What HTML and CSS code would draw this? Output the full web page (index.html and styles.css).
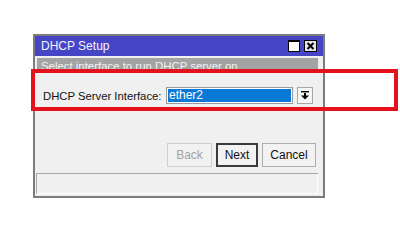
FILE: index.html
```html
<!DOCTYPE html>
<html>
<head>
<meta charset="utf-8">
<link rel="stylesheet" href="styles.css">
</head>
<body>
<div class="window">
  <div class="titlebar">
    <span class="title">DHCP Setup</span>
    <div class="tbtns">
      <span class="tbtn max"><svg width="12" height="12" viewBox="0 0 12 12"><rect x="0.5" y="0.5" width="11" height="11" fill="#fff" stroke="#000"/><rect x="0" y="0" width="12" height="2" fill="#000"/></svg></span>
      <span class="tbtn close"><svg width="13" height="12" viewBox="0 0 13 12"><rect x="0.5" y="0.5" width="12" height="11" fill="#e6e6e6" stroke="#000"/><path d="M3.5 3 L9.5 9 M9.5 3 L3.5 9" stroke="#000" stroke-width="2"/></svg></span>
    </div>
  </div>
  <div class="banner"><span>Select interface to run DHCP server on</span></div>
  <div class="row">
    <span class="label">DHCP Server Interface:</span>
    <div class="field"><span class="sel">ether2</span></div>
    <span class="drop"><svg width="8" height="9" viewBox="0 0 8 9"><rect x="0" y="0" width="8" height="1.4" fill="#000"/><rect x="3" y="2" width="2" height="3" fill="#000"/><path d="M0 4.5 H8 L4 8.5 Z" fill="#000"/></svg></span>
  </div>
  <div class="buttons">
    <span class="btn disabled">Back</span>
    <span class="btn default">Next</span>
    <span class="btn">Cancel</span>
  </div>
  <div class="sep"></div>
  <div class="status"></div>
</div>
<div class="highlight"></div>
</body>
</html>
```
FILE: styles.css
```css
html, body {
  margin: 0;
  padding: 0;
  background: #ffffff;
  width: 400px;
  height: 236px;
  overflow: hidden;
  font-family: "Liberation Sans", Arial, sans-serif;
}
.window {
  margin: 34px 0 0 33px;
  width: 292px;
  height: 164px;
  box-sizing: border-box;
  border: 2px solid #7c7c7c;
  background: #f0f0f0;
  display: flex;
  flex-direction: column;
}
.titlebar {
  height: 20px;
  background: #4545c5;
  display: flex;
  align-items: center;
  justify-content: space-between;
  padding: 0 6px 0 6px;
}
.title {
  color: #f4f4ff;
  font-size: 12px;
}
.tbtns {
  display: flex;
  gap: 4px;
  align-items: center;
  height: 12px;
}
.tbtn { display: block; height: 12px; }
.tbtn svg { display: block; }
.banner {
  margin: 2px 5px 0 2px;
  height: 11px;
  background: #a3a3a3;
  overflow: hidden;
  padding-left: 4px;
}
.banner span {
  display: block;
  color: #f2f2f2;
  font-size: 11.4px;
  line-height: 14px;
  margin-top: 1px;
}
.row {
  margin-top: 18px;
  height: 17px;
  display: flex;
  align-items: center;
  padding-left: 8px;
}
.label {
  font-size: 11.3px;
  color: #111;
  width: 123px;
}
.field {
  width: 127px;
  height: 17px;
  box-sizing: border-box;
  border: 1px solid #9a9a9a;
  background: #fff;
  padding: 1px;
}
.sel {
  display: block;
  height: 13px;
  background: #0a78d6;
  color: #fff;
  font-size: 12px;
  line-height: 13px;
  padding-left: 1px;
}
.drop {
  margin-left: 4px;
  width: 16px;
  height: 17px;
  box-sizing: border-box;
  border: 1px solid #a8a8a8;
  background: #f6f6f6;
  display: flex;
  align-items: center;
  justify-content: center;
}
.drop svg { display: block; }
.buttons {
  margin-top: 39px;
  display: flex;
  justify-content: flex-end;
  gap: 4px;
  padding-right: 7px;
}
.btn {
  height: 24px;
  box-sizing: border-box;
  border: 1px solid #adadad;
  background: #f2f2f2;
  font-size: 12px;
  line-height: 22px;
  color: #111;
  text-align: center;
}
.btn.disabled {
  width: 45px;
  color: #a2a2a2;
  border-color: #cfcfcf;
}
.btn.default {
  width: 42px;
  border: 2px solid #3a3a3a;
  line-height: 20px;
}
.btn:last-child {
  width: 54px;
}
.sep {
  margin: 6px 5px 0 1px;
  height: 1px;
  background: #a8a8a8;
}
.status {
  margin: 0 5px 0 1px;
  height: 20px;
  box-sizing: border-box;
  border-left: 1px solid #a8a8a8;
  border-bottom: 1px solid #ffffff;
  border-right: 1px solid #ffffff;
  background: #f0f0f0;
}
.highlight {
  position: absolute;
  left: 31px;
  top: 69px;
  width: 367px;
  height: 42px;
  box-sizing: border-box;
  border: 4px solid #e3121c;
}
```
